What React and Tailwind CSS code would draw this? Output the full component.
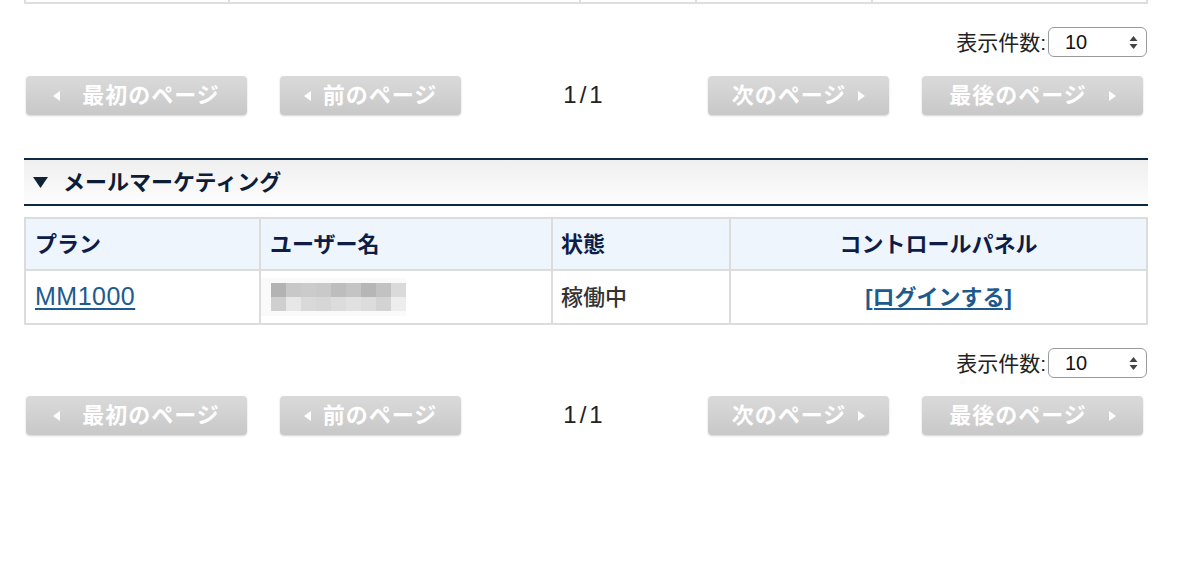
import React from 'react';

const FONT = { fontFamily: '"Liberation Sans", "Noto Sans CJK JP", sans-serif' };

const blurTop = ['#b3b3b3', '#c8c8c8', '#cbcbcb', '#c9c9c9', '#bdbdbd', '#c4c4c4', '#b6b6b6', '#c2c2c2', '#dadada'];
const blurBottom = ['#cfcfcf', '#e7e7e7', '#d9d9d9', '#d6d6d6', '#dcdcdc', '#e1e1e1', '#dcdcdc', '#d3d3d3', '#ededed'];

function PerPage() {
  return (
    <div className="flex h-[30px] items-center justify-end pr-[1px]">
      <span className="text-[21px] leading-none text-[#222]">表示件数:</span>
      <div className="ml-[2px] flex h-[30px] w-[99px] items-center justify-between rounded-[6px] border border-[#9a9a9a] bg-white pl-[16px] pr-[8px] text-[20px] leading-none text-[#111]">
        <span>10</span>
        <svg width="9" height="15" viewBox="0 0 9 15">
          <path d="M4.5 1 L8.5 6 L0.5 6 Z" fill="#444" />
          <path d="M4.5 14 L8.5 9 L0.5 9 Z" fill="#444" />
        </svg>
      </div>
    </div>
  );
}

function Arrow({ dir }) {
  return (
    <svg width="7" height="10" viewBox="0 0 7 10">
      {dir === 'left'
        ? <path d="M0 5 L7 0 L7 10 Z" fill="#fff" />
        : <path d="M7 5 L0 0 L0 10 Z" fill="#fff" />}
    </svg>
  );
}

function PageButton({ label, dir, wide }) {
  return (
    <div
      className={`flex h-[39px] items-center justify-center rounded-[4px] bg-gradient-to-b from-[#dadada] to-[#c8c8c8] text-[22px] font-bold text-white shadow-[0_1px_2px_rgba(0,0,0,0.18)] ${wide ? 'w-[221px] gap-[22px]' : 'w-[181px] gap-[12px]'}`}
    >
      {dir === 'left' && <Arrow dir="left" />}
      <span className="tracking-[1px]">{label}</span>
      {dir === 'right' && <Arrow dir="right" />}
    </div>
  );
}

function Pager() {
  return (
    <div className="ml-[2px] flex w-[1117px] items-start justify-between">
      <div className="flex gap-[33px]">
        <PageButton label="最初のページ" dir="left" wide />
        <PageButton label="前のページ" dir="left" />
      </div>
      <div className="mt-[1px] text-[24px] tracking-[3px] text-[#222]">1/1</div>
      <div className="flex gap-[33px]">
        <PageButton label="次のページ" dir="right" />
        <PageButton label="最後のページ" dir="right" wide />
      </div>
    </div>
  );
}

export default function App() {
  return (
    <div className="min-h-[566px] w-[1184px] bg-white pl-[24px]" style={FONT}>
      <div className="w-[1124px]">
        {/* tail of the previous table */}
        <div className="grid h-[4px] grid-cols-[204px_351px_116px_176px_1fr] border-x-2 border-b-2 border-[#dedede]">
          <div className="border-r-2 border-[#dedede]" />
          <div className="border-r-2 border-[#dedede]" />
          <div className="border-r-2 border-[#dedede]" />
          <div className="border-r-2 border-[#dedede]" />
          <div />
        </div>

        <div className="mt-[23px]">
          <PerPage />
        </div>
        <div className="mt-[19px]">
          <Pager />
        </div>

        {/* section header */}
        <div className="mt-[43px] flex h-[48px] items-center border-y-2 border-[#0c2a45] bg-gradient-to-b from-[#efefef] to-[#fdfdfd] pl-[9px]">
          <svg width="15" height="11" viewBox="0 0 15 11">
            <path d="M0 0 L15 0 L7.5 11 Z" fill="#0f2236" />
          </svg>
          <span className="ml-[15px] text-[22px] font-bold text-[#0d1d38]">メールマーケティング</span>
        </div>

        {/* table */}
        <div className="mt-[11px] border-2 border-[#dcdcdc]">
          <div className="grid h-[52px] grid-cols-[235px_292px_178px_1fr] border-b-2 border-[#dcdcdc] bg-[#eef5fc] text-[22px] font-bold text-[#0e1c48]">
            <div className="flex items-center border-r-2 border-[#dcdcdc] pl-[9px]">プラン</div>
            <div className="flex items-center border-r-2 border-[#dcdcdc] pl-[9px]">ユーザー名</div>
            <div className="flex items-center border-r-2 border-[#dcdcdc] pl-[8px]">状態</div>
            <div className="flex items-center justify-center">コントロールパネル</div>
          </div>
          <div className="grid h-[52px] grid-cols-[235px_292px_178px_1fr] text-[22px]">
            <div className="flex items-center border-r-2 border-[#dcdcdc] pl-[9px]">
              <a href="#" className="text-[25px] tracking-[0.5px] text-[#1d5a8e] underline underline-offset-[3px]">MM1000</a>
            </div>
            <div className="flex items-center border-r-2 border-[#dcdcdc]">
              <div className="flex h-[38px] items-center bg-[#fafafa] pl-[10px]">
                <div className="flex flex-col">
                  <div className="flex">
                    {blurTop.map((c, i) => (
                      <div key={i} className="h-[14px] w-[15px]" style={{ background: c }} />
                    ))}
                  </div>
                  <div className="flex">
                    {blurBottom.map((c, i) => (
                      <div key={i} className="h-[14px] w-[15px]" style={{ background: c }} />
                    ))}
                  </div>
                </div>
              </div>
            </div>
            <div className="flex items-center border-r-2 border-[#dcdcdc] pl-[8px] font-medium text-[#333]">稼働中</div>
            <div className="flex items-center justify-center">
              <a href="#" className="font-semibold text-[#1d5a8e] underline underline-offset-[3px]">[ログインする]</a>
            </div>
          </div>
        </div>

        <div className="mt-[23px]">
          <PerPage />
        </div>
        <div className="mt-[18px]">
          <Pager />
        </div>
      </div>
    </div>
  );
}
